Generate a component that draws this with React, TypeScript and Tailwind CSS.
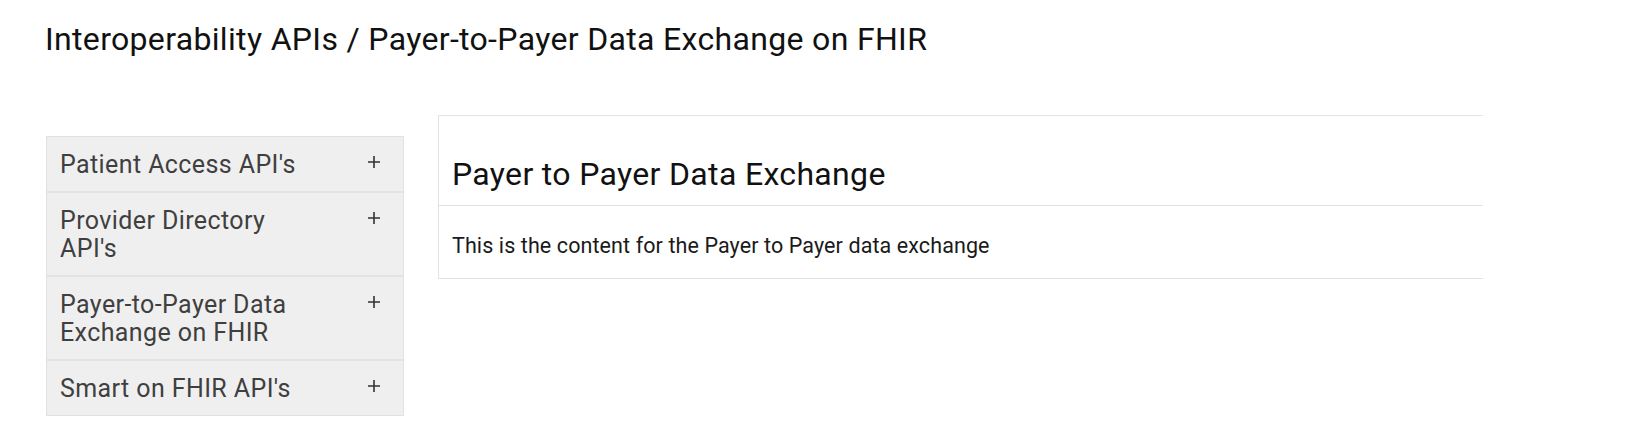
import React from 'react';

const menuItems = [
  "Patient Access API's",
  "Provider Directory API's",
  'Payer-to-Payer Data Exchange on FHIR',
  "Smart on FHIR API's",
];

function PlusIcon() {
  return (
    <svg width="12" height="12" viewBox="0 0 12 12" className="shrink-0 mt-[5px]">
      <path d="M0 6h12M6 0v12" stroke="#333" strokeWidth="1.6" />
    </svg>
  );
}

export default function App() {
  return (
    <div className="min-h-[440px] bg-white font-['Roboto',sans-serif] pl-[46px]">
      {/* Breadcrumb title */}
      <h1 className="pt-[20px] text-[32px] leading-[38px] tracking-[0.33px] text-[#111] font-normal -ml-[1px]">
        Interoperability APIs / Payer-to-Payer Data Exchange on FHIR
      </h1>

      <div className="mt-[57px] flex items-start gap-[34px]">
        {/* Accordion menu */}
        <div className="mt-[21px] w-[358px] bg-[#efefef] border border-[#e2e2e2]">
          {menuItems.map((item, i) => (
            <div
              key={item}
              className={`flex items-start justify-between pl-[13px] pr-[23px] pt-[14px] pb-[12px] ${
                i < menuItems.length - 1 ? 'border-b-2 border-[#e3e3e3]' : ''
              }`}
            >
              <span className="w-[252px] text-[25px] leading-[28px] tracking-[0.4px] text-[#3f3f3f]">
                {item}
              </span>
              <PlusIcon />
            </div>
          ))}
        </div>

        {/* Content panel */}
        <div className="w-[1045px] border-l border-y border-[#e2e2e2]">
          <div className="border-b border-[#e2e2e2] px-[13px] pt-[39px] pb-[12px]">
            <h2 className="text-[32px] leading-[38px] tracking-[0.33px] text-[#111] font-normal">
              Payer to Payer Data Exchange
            </h2>
          </div>
          <div className="px-[13px] pt-[27px] pb-[20px]">
            <p className="text-[21.5px] leading-[25px] tracking-[0.1px] text-[#1a1a1a]">
              This is the content for the Payer to Payer data exchange
            </p>
          </div>
        </div>
      </div>
    </div>
  );
}
